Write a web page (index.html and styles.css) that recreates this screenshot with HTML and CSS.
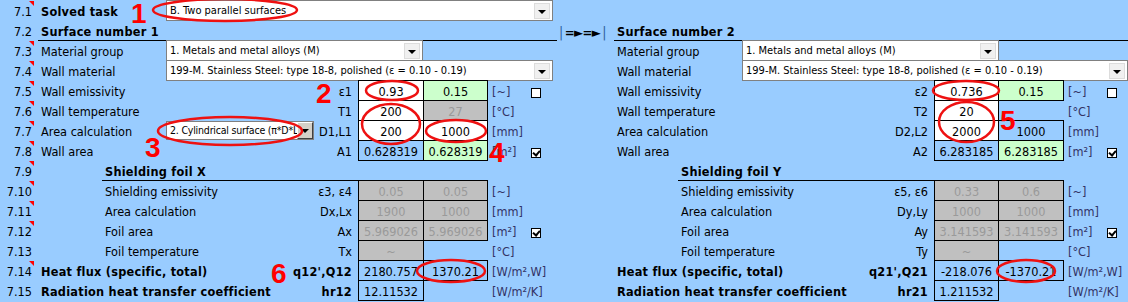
FILE: index.html
```html
<!DOCTYPE html>
<html>
<head>
<meta charset="utf-8">
<title>Radiation heat transfer</title>
<link rel="stylesheet" href="styles.css">
</head>
<body>
<div class="sheet">
  <!-- 7.1 -->
  <div class="c num t">7.1</div>
  <div class="c lbl b">Solved task</div>
  <div class="dd dd-wide"><span class="ddt">B. Two parallel surfaces</span><i class="btn"></i></div>

  <!-- 7.2 -->
  <div class="c num">7.2</div>
  <div class="c hdr b">Surface number 1</div>
  <div class="c arrows"><span class="bar">|</span>=►=►<span class="bar">|</span></div>
  <div class="c rhdr b">Surface number 2</div>

  <!-- 7.3 -->
  <div class="c num t">7.3</div>
  <div class="c lbl">Material group</div>
  <div class="dd dd-mid"><span class="ddt">1. Metals and metal alloys (M)</span><i class="btn"></i></div>
  <div class="c rlbl">Material group</div>
  <div class="dd rdd dd-mid"><span class="ddt">1. Metals and metal alloys (M)</span><i class="btn"></i></div>

  <!-- 7.4 -->
  <div class="c num t">7.4</div>
  <div class="c lbl">Wall material</div>
  <div class="dd dd-wide"><span class="ddt">199-M. Stainless Steel: type 18-8, polished (ε = 0.10 - 0.19)</span><i class="btn"></i></div>
  <div class="c rlbl">Wall material</div>
  <div class="dd rdd dd-rwide"><span class="ddt">199-M. Stainless Steel: type 18-8, polished (ε = 0.10 - 0.19)</span><i class="btn"></i></div>

  <!-- 7.5 -->
  <div class="c num t">7.5</div>
  <div class="c lbl">Wall emissivity</div>
  <div class="c sym">ε1</div>
  <div class="c v v1 w">0.93</div>
  <div class="c v v2 g">0.15</div>
  <div class="c unit">[~]</div>
  <div class="chk"><span class="box"></span></div>
  <div class="c rlbl">Wall emissivity</div>
  <div class="c rsym">ε2</div>
  <div class="c v rv1 w">0.736</div>
  <div class="c v rv2 g">0.15</div>
  <div class="c runit">[~]</div>
  <div class="chk rchk"><span class="box"></span></div>

  <!-- 7.6 -->
  <div class="c num t">7.6</div>
  <div class="c lbl">Wall temperature</div>
  <div class="c sym">T1</div>
  <div class="c v v1 w">200</div>
  <div class="c v v2 x">27</div>
  <div class="c unit">[°C]</div>
  <div class="c rlbl">Wall temperature</div>
  <div class="c rsym">T2</div>
  <div class="c v rv1 w">20</div>
  <div class="c runit">[°C]</div>

  <!-- 7.7 -->
  <div class="c num t">7.7</div>
  <div class="c lbl">Area calculation</div>
  <div class="dd dd-small"><span class="ddt">2. Cylindrical surface (π*D*L)</span><i class="btn btn3d"></i></div>
  <div class="c sym">D1,L1</div>
  <div class="c v v1 w">200</div>
  <div class="c v v2 w">1000</div>
  <div class="c unit">[mm]</div>
  <div class="c rlbl">Area calculation</div>
  <div class="c rsym">D2,L2</div>
  <div class="c v rv1 w">2000</div>
  <div class="c v rv2">1000</div>
  <div class="c runit">[mm]</div>

  <!-- 7.8 -->
  <div class="c num t">7.8</div>
  <div class="c lbl">Wall area</div>
  <div class="c sym">A1</div>
  <div class="c v v1">0.628319</div>
  <div class="c v v2 g">0.628319</div>
  <div class="c unit">[m²]</div>
  <div class="chk"><span class="box on"></span></div>
  <div class="c rlbl">Wall area</div>
  <div class="c rsym">A2</div>
  <div class="c v rv1">6.283185</div>
  <div class="c v rv2 g">6.283185</div>
  <div class="c runit">[m²]</div>
  <div class="chk rchk"><span class="box on"></span></div>

  <!-- 7.9 -->
  <div class="c num t">7.9</div>
  <div class="c shdr b">Shielding foil X</div>
  <div class="c rshdr b">Shielding foil Y</div>

  <!-- 7.10 -->
  <div class="c num t">7.10</div>
  <div class="c sub">Shielding emissivity</div>
  <div class="c sym">ε3, ε4</div>
  <div class="c v v1 x">0.05</div>
  <div class="c v v2 x">0.05</div>
  <div class="c unit">[~]</div>
  <div class="c rsub">Shielding emissivity</div>
  <div class="c rsym">ε5, ε6</div>
  <div class="c v rv1 x">0.33</div>
  <div class="c v rv2 x">0.6</div>
  <div class="c runit">[~]</div>

  <!-- 7.11 -->
  <div class="c num t">7.11</div>
  <div class="c sub">Area calculation</div>
  <div class="c sym">Dx,Lx</div>
  <div class="c v v1 x">1900</div>
  <div class="c v v2 x">1000</div>
  <div class="c unit">[mm]</div>
  <div class="c rsub">Area calculation</div>
  <div class="c rsym">Dy,Ly</div>
  <div class="c v rv1 x">1000</div>
  <div class="c v rv2 x">1000</div>
  <div class="c runit">[mm]</div>

  <!-- 7.12 -->
  <div class="c num t">7.12</div>
  <div class="c sub">Foil area</div>
  <div class="c sym">Ax</div>
  <div class="c v v1 x">5.969026</div>
  <div class="c v v2 x">5.969026</div>
  <div class="c unit">[m²]</div>
  <div class="chk"><span class="box on"></span></div>
  <div class="c rsub">Foil area</div>
  <div class="c rsym">Ay</div>
  <div class="c v rv1 x">3.141593</div>
  <div class="c v rv2 x">3.141593</div>
  <div class="c runit">[m²]</div>
  <div class="chk rchk"><span class="box on"></span></div>

  <!-- 7.13 -->
  <div class="c num">7.13</div>
  <div class="c sub">Foil temperature</div>
  <div class="c sym">Tx</div>
  <div class="c v v1 x">~</div>
  <div class="c unit">[°C]</div>
  <div class="c rsub">Foil temperature</div>
  <div class="c rsym">Ty</div>
  <div class="c v rv1 x">~</div>
  <div class="c runit">[°C]</div>

  <!-- 7.14 -->
  <div class="c num t">7.14</div>
  <div class="c lbl b">Heat flux (specific, total)</div>
  <div class="c sym b">q12',Q12</div>
  <div class="c v v1">2180.757</div>
  <div class="c v v2">1370.21</div>
  <div class="c unit">[W/m²,W]</div>
  <div class="c rlbl b">Heat flux (specific, total)</div>
  <div class="c rsym b">q21',Q21</div>
  <div class="c v rv1">-218.076</div>
  <div class="c v rv2">-1370.21</div>
  <div class="c runit">[W/m²,W]</div>

  <!-- 7.15 -->
  <div class="c num">7.15</div>
  <div class="c lbl b">Radiation heat transfer coefficient</div>
  <div class="c sym b">hr12</div>
  <div class="c v v1">12.11532</div>
  <div class="c unit">[W/m²/K]</div>
  <div class="c rlbl b">Radiation heat transfer coefficient</div>
  <div class="c rsym b">hr21</div>
  <div class="c v rv1">1.211532</div>
  <div class="c runit">[W/m²/K]</div>

  <svg class="marks" width="1128" height="302" viewBox="0 0 1128 302">
    <g class="ring">
      <ellipse cx="225" cy="10" rx="72" ry="11"/>
      <ellipse cx="392" cy="90.5" rx="26" ry="9.5"/>
      <ellipse cx="391" cy="124" rx="29" ry="20"/>
      <ellipse cx="456" cy="131" rx="30" ry="11"/>
      <ellipse cx="230" cy="131" rx="72" ry="14"/>
      <ellipse cx="451" cy="271" rx="34" ry="11"/>
      <ellipse cx="966" cy="90.5" rx="33" ry="9.5"/>
      <ellipse cx="966.5" cy="122" rx="27.5" ry="20"/>
      <ellipse cx="1026" cy="271" rx="29" ry="11"/>
    </g>
    <g class="nums">
      <text x="131" y="23">1</text>
      <text x="316" y="103">2</text>
      <text x="145" y="157">3</text>
      <text x="489" y="162">4</text>
      <text x="1000" y="130">5</text>
      <text x="271" y="283">6</text>
    </g>
  </svg>
</div>
</body>
</html>
```

FILE: styles.css
```css
* { box-sizing: border-box; margin: 0; padding: 0; }
html, body { background: #99ccff; }
body {
  width: 1128px;
  height: 302px;
  overflow: hidden;
  font-family: "DejaVu Sans Condensed", "Liberation Sans", sans-serif;
  font-size: 12.6px;
  color: #000;
}
.sheet {
  position: relative;
  display: grid;
  grid-template-columns: 36px 66px 64px 148px 44px 65px 64px 39px 31px 57px 64px 64px 148px 44px 64px 65px 37px 28px;
  grid-template-rows: repeat(15, 20px);
  height: 302px;
}
.c {
  white-space: nowrap;
  padding-top: 4px;
  line-height: 16px;
}
.b { font-weight: bold; letter-spacing: 0.25px; }

.num { grid-column: 1; text-align: right; padding-right: 4px; position: relative; }
.num.t::after {
  content: "";
  position: absolute;
  top: 1px;
  right: 2px;
  border-top: 5px solid #ff0000;
  border-left: 5px solid transparent;
}
.lbl { grid-column: 2 / 4; padding-left: 5px; }
.sub { grid-column: 3 / 4; padding-left: 3px; }
.rlbl { grid-column: 11 / 13; padding-left: 3px; }
.rsub { grid-column: 12 / 13; padding-left: 3px; }
.sym, .rsym { display: flex; justify-content: flex-end; padding-right: 6px; }
.sym { grid-column: 5; }
.rsym { grid-column: 14; }

.hdr { grid-column: 2 / 10; margin-left: 2px; padding-left: 3px; border-bottom: 1px solid #000; margin-bottom: -1px; }
.rhdr { grid-column: 11 / 19; padding-left: 3px; border-bottom: 1px solid #000; margin-bottom: -1px; }
.shdr { grid-column: 3 / 8; padding-left: 3px; border-bottom: 1px solid #000; margin-bottom: -1px; }
.rshdr { grid-column: 12 / 17; padding-left: 3px; border-bottom: 1px solid #000; margin-bottom: -1px; }

.arrows { grid-column: 10; font-weight: bold; padding-left: 0; font-size: 13px; letter-spacing: -0.5px; }
.arrows .bar { color: #2f5f9f; font-weight: normal; font-size: 14px; padding: 0 2px; }

.v {
  border: 1px solid #000;
  margin: 0 -1px -1px 0;
  text-align: center;
  padding-top: 3px;
}
.v1 { grid-column: 6; }
.v2 { grid-column: 7; }
.rv1 { grid-column: 15; }
.rv2 { grid-column: 16; }
.w { background: #ffffff; }
.g { background: #ccffcc; }
.x { background: #c0c0c0; color: #9a9a9a; }

.unit, .runit { padding-left: 5px; color: #333366; }
.unit { grid-column: 8; }
.runit { grid-column: 17; }

.chk { grid-column: 9; padding: 8px 0 0 5px; }
.rchk { grid-column: 18; padding-left: 7px; }
.box {
  display: block;
  width: 10px;
  height: 10px;
  border: 1px solid #000;
  background: #fff;
  position: relative;
}
.box.on::after {
  content: "";
  position: absolute;
  left: 2px;
  top: 0px;
  width: 3px;
  height: 5px;
  border-right: 2px solid #000;
  border-bottom: 2px solid #000;
  transform: rotate(40deg);
}

.dd {
  grid-column: 4 / 10;
  justify-self: start;
  display: flex;
  align-items: center;
  background: #fff;
  border: 1px solid #808080;
  margin-bottom: -1px;
  padding-left: 3px;
  font-size: 11px;
  height: 21px;
}
.rdd { grid-column: 13 / 19; }
.dd-wide { width: 387px; }
.dd-mid { width: 257px; }
.dd-rwide { width: 386px; }
.dd.dd-small {
  grid-column: 4 / 5;
  width: 148px;
  height: 19px;
  align-self: center;
  margin: 0;
  padding-right: 0;
  font-size: 10.5px;
  letter-spacing: -0.2px;
}
.ddt { flex: 1; min-width: 0; overflow: hidden; white-space: nowrap; }
.btn {
  flex: none;
  position: relative;
  width: 16px;
  height: 16px;
  margin: 0 2px 0 2px;
  background: #f0f0f0;
  border: 1px solid #dcdcdc;
}
.btn::after {
  content: "";
  position: absolute;
  left: 3px;
  top: 6px;
  border-top: 4px solid #000;
  border-left: 4px solid transparent;
  border-right: 4px solid transparent;
}
.btn3d {
  margin: 0;
  height: 17px;
  background: #d4d0c8;
  border: 1px solid;
  border-color: #fff #404040 #404040 #fff;
}

.marks {
  position: absolute;
  left: 0;
  top: 0;
  pointer-events: none;
}
.ring ellipse { fill: none; stroke: #ee1111; stroke-width: 2.5; }
.nums text {
  font-family: "Liberation Sans", Arial, sans-serif;
  font-weight: bold;
  font-size: 28px;
  fill: #ff0000;
}
```
